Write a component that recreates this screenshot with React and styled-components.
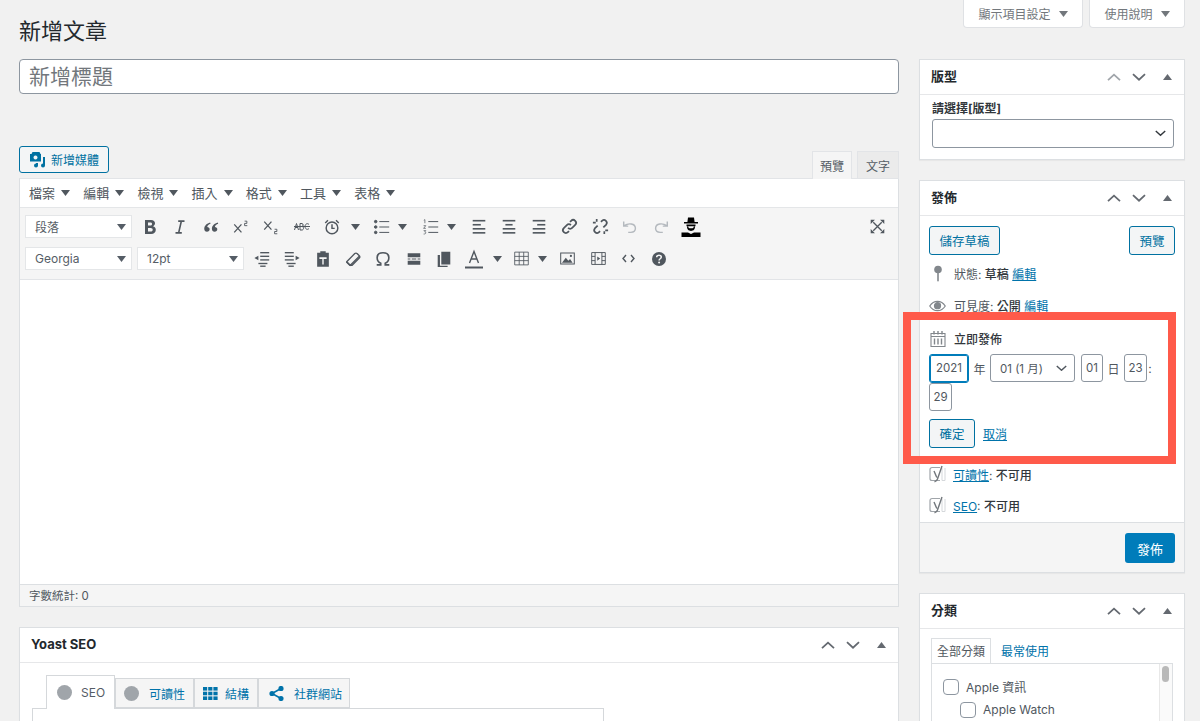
import React from 'react';
import styled, { createGlobalStyle } from 'styled-components';

const GlobalStyle = createGlobalStyle`
  html, body {
    margin: 0;
    background: #f1f1f1;
    color: #32373c;
    font-family: Inter, "Noto Sans CJK TC", sans-serif;
    font-size: 13px;
  }
  * { box-sizing: border-box; }
`

const Wrap = styled.div`
  width: 1200px;
  height: 721px;
  overflow: hidden;
  padding: 0 15px 0 19px;
`
const TopRow = styled.div`
  display: flex;
  justify-content: space-between;
  align-items: flex-start;
  height: 59px;
`
const Heading = styled.h1`
  margin: 0;
  padding-top: 16px;
  font-size: 22px;
  line-height: 30px;
  font-weight: 400;
  color: #23282d;
`
const ScreenMeta = styled.div`
  display: flex;
  gap: 6px;
`
const MetaButton = styled.div`
  display: flex;
  align-items: center;
  justify-content: center;
  gap: 8px;
  width: ${p => p.$w}px;
  height: 28px;
  background: #fff;
  border: 1px solid #dfe1e4;
  border-top: 0;
  border-radius: 0 0 4px 4px;
  font-size: 12px;
  color: #72777c;
`
const Columns = styled.div`
  display: flex;
  gap: 20px;
  align-items: flex-start;
`
const Main = styled.div`
  width: 880px;
`
const Side = styled.div`
  width: 266px;
  display: flex;
  flex-direction: column;
  gap: 20px;
`
const TitleInput = styled.div`
  height: 35px;
  background: #fff;
  border: 1px solid #8d96a0;
  border-radius: 4px;
  padding-left: 9px;
  font-size: 21px;
  line-height: 33px;
  color: #72777c;
`
const EditorTop = styled.div`
  display: flex;
  justify-content: space-between;
  align-items: flex-end;
  margin-top: 52px;
  height: 32px;
`
const MediaButton = styled.div`
  display: flex;
  align-items: center;
  gap: 5px;
  width: 90px;
  height: 27px;
  margin-bottom: 5px;
  padding-left: 9px;
  background: #f3f5f6;
  border: 1px solid #0071a1;
  border-radius: 3px;
  color: #0071a1;
  font-size: 12px;
`
const EditorTabs = styled.div`
  display: flex;
  gap: 5px;
`
const EditorTab = styled.div`
  display: flex;
  align-items: center;
  justify-content: center;
  width: ${p => p.$w}px;
  height: 28px;
  margin-bottom: -1px;
  position: relative;
  font-size: 12px;
  color: #555d66;
  background: ${p => (p.$active ? '#f5f5f5' : '#ebebeb')};
  border: 1px solid #e2e4e7;
  border-bottom: ${p => (p.$active ? '0' : '1px solid #e2e4e7')};
`
const Editor = styled.div`
  border: 1px solid #dcdfe2;
  border-top: 1px solid #e2e4e7;
  height: 429px;
  display: flex;
  flex-direction: column;
`
const MenuBar = styled.div`
  display: flex;
  align-items: center;
  height: 29px;
  flex-shrink: 0;
  padding: 0 0 1px 9px;
  background: #fff;
  border-bottom: 1px solid #e4e6e8;
`
const MenuItem = styled.div`
  display: flex;
  align-items: center;
  gap: 6px;
  width: 54.2px;
  font-size: 13px;
  color: #50575e;
`
const Toolbars = styled.div`
  height: 72px;
  flex-shrink: 0;
  padding: 7px 5px 0;
  background: #f5f5f5;
  border-bottom: 1px solid #e2e4e7;
  display: flex;
  flex-direction: column;
  gap: 9px;
`
const ToolRow = styled.div`
  display: flex;
  align-items: center;
  height: 23px;
  position: relative;
`
const ToolSelect = styled.div`
  display: flex;
  align-items: center;
  justify-content: space-between;
  width: 107px;
  height: 23px;
  margin-right: ${p => p.$mr}px;
  padding: 0 5px 0 9px;
  background: #fff;
  border: 1px solid #e4e6e8;
  font-size: 12px;
  color: #555d66;
`
const ToolButton = styled.div`
  display: flex;
  align-items: center;
  justify-content: ${p => (p.$pad === undefined ? 'center' : 'flex-start')};
  width: ${p => p.$w || 30.3}px;
  height: 23px;
  padding-left: ${p => p.$pad || 0}px;
  flex-shrink: 0;
  color: ${p => (p.$off ? '#b4b9be' : '#50575e')};
`
const ToolSpacer = styled.div`
  flex: 1;
`
const Content = styled.div`
  flex: 1;
  background: #fff;
`
const StatusBar = styled.div`
  height: 22px;
  flex-shrink: 0;
  padding: 0 0 2px 9px;
  display: flex;
  align-items: center;
  background: #f5f5f5;
  border-top: 1px solid #dcdfe2;
  font-size: 11.5px;
  color: #50575e;
`
const Box = styled.section`
  position: relative;
  background: #fff;
  border: 1px solid #dcdfe2;
  box-shadow: 0 1px 1px rgba(0, 0, 0, 0.04);
`
const BoxHead = styled.div`
  display: flex;
  align-items: center;
  justify-content: space-between;
  height: 35px;
  padding: 0 0 3px 11px;
  border-bottom: 1px solid #e6e7e9;
  font-size: 13px;
  font-weight: 700;
  color: #23282d;
`
const HeadControls = styled.div`
  display: flex;
  align-items: center;
  margin-top: 3px;
  color: #646970;
`
const HeadControl = styled.div`
  display: flex;
  justify-content: center;
  width: ${p => p.$w || 25}px;
  color: ${p => (p.$dim ? '#a0a5aa' : '#646970')};
`
const TemplateBody = styled.div`
  height: 64px;
  padding: 5px 12px 0;
`
const FieldLabel = styled.div`
  font-size: 12px;
  line-height: 18px;
  font-weight: 700;
  color: #32373c;
  margin-bottom: 1px;
`
const NativeSelect = styled.div`
  display: flex;
  align-items: center;
  justify-content: flex-end;
  gap: 8px;
  width: ${p => p.$w || 242}px;
  height: 29px;
  padding-right: 7px;
  background: #fff;
  border: 1px solid #8d96a0;
  border-radius: 3px;
  font-size: 12px;
  color: #32373c;
`
const PublishBody = styled.div`
  padding: 10px 9px 0;
  height: 306px;
`
const ButtonRow = styled.div`
  display: flex;
  justify-content: space-between;
  margin-bottom: 4px;
`
const Button = styled.div`
  display: inline-flex;
  align-items: center;
  justify-content: center;
  width: ${p => p.$w}px;
  height: 28.5px;
  background: #f3f5f6;
  border: 1px solid #0071a1;
  border-radius: 3px;
  color: #0071a1;
  font-size: 12.5px;
`
const InfoRow = styled.div`
  display: flex;
  align-items: center;
  gap: ${p => p.$gap || 8}px;
  height: ${p => p.$h || 32}px;
  margin-top: ${p => p.$mt || 0}px;
  padding-bottom: 2px;
  font-size: 12px;
  color: #50575e;
`
const IconSlot = styled.div`
  display: flex;
  justify-content: center;
  width: 17px;
  color: #82878c;
`
const Strong = styled.b`
  font-weight: 500;
  color: #32373c;
`
const TextLink = styled.a`
  color: #0073aa;
  text-decoration: underline;
  margin-left: ${p => p.$ml || 0}px;
  font-size: ${p => p.$size || 12}px;
`
const DateFields = styled.div`
  display: flex;
  flex-wrap: wrap;
  align-items: center;
  width: 240px;
  font-size: 12px;
  color: #50575e;
`
const DateInput = styled.div`
  display: flex;
  align-items: center;
  justify-content: center;
  width: ${p => p.$w}px;
  height: ${p => (p.$focus ? 29 : 28.5)}px;
  background: #fff;
  border: 1px solid ${p => (p.$focus ? '#007cba' : '#8d96a0')};
  box-shadow: ${p => (p.$focus ? 'inset 0 0 0 1px #007cba' : 'none')};
  border-radius: 3px;
  font-size: 11.5px;
  color: #50575e;
`
const DateSep = styled.span`
  width: ${p => p.$w}px;
  text-align: center;
`
const MonthSelect = styled.div`
  display: flex;
  align-items: center;
  justify-content: space-between;
  width: 85px;
  height: 28.5px;
  padding: 0 7px 0 9px;
  background: #fff;
  border: 1px solid #8d96a0;
  border-radius: 3px;
  font-size: 11.5px;
  color: #50575e;
`
const DateActions = styled.div`
  display: flex;
  align-items: center;
  gap: 8px;
  margin-top: 8px;
  margin-bottom: 12px;
`
const PublishFooter = styled.div`
  display: flex;
  justify-content: flex-end;
  height: 50px;
  padding: 10px 9px 0;
  background: #f5f5f5;
  border-top: 1px solid #dcdfe2;
`
const PrimaryButton = styled.div`
  display: flex;
  align-items: center;
  justify-content: center;
  width: 50px;
  height: 30px;
  background: #007cba;
  border-radius: 3px;
  color: #fff;
  font-size: 13px;
`
const Highlight = styled.div`
  position: absolute;
  left: -17px;
  top: 131px;
  width: 273px;
  height: 152px;
  border: 8.5px solid #ff5a4a;
  pointer-events: none;
`
const CategoryBody = styled.div`
  padding: 8px 11px 0;
`
const CatTabs = styled.div`
  display: flex;
  align-items: flex-end;
  height: 26px;
`
const CatTab = styled.div`
  display: flex;
  align-items: center;
  justify-content: center;
  height: 26px;
  padding: 0 5px 3px;
  margin-right: 4px;
  font-size: 12px;
  color: ${p => (p.$active ? '#50575e' : '#0073aa')};
  background: #fff;
  border: ${p => (p.$active ? '1px solid #dcdfe2' : '1px solid transparent')};
  border-bottom: 0;
  margin-bottom: -1px;
  position: relative;
`
const CatList = styled.div`
  position: relative;
  height: 80px;
  width: 242px;
  padding: 11px 0 0 11px;
  border: 1px solid #dcdfe2;
`
const CatRow = styled.div`
  display: flex;
  align-items: center;
  gap: 7px;
  height: 23px;
  margin-left: ${p => (p.$depth ? 17 : 0)}px;
  font-size: 12px;
  color: #50575e;
`
const Check = styled.div`
  width: 16px;
  height: 16px;
  border: 1px solid #8d96a0;
  border-radius: 4px;
  background: #fff;
`
const ScrollTrack = styled.div`
  position: absolute;
  top: 0;
  right: 0;
  bottom: 0;
  width: 13px;
  background: #fafafa;
  border-left: 1px solid #e8e8e8;
`
const ScrollThumb = styled.div`
  margin: 2px 0 0 2px;
  width: 7px;
  height: 16px;
  border-radius: 4px;
  background: #b9b9b9;
`
const YoastBox = styled(Box)`
  margin-top: 20px;
`
const YoastBody = styled.div`
  height: 60px;
  padding: 11px 12px 0;
`
const YoastTabs = styled.div`
  display: flex;
  align-items: flex-end;
  height: 34px;
  padding-left: 14px;
`
const YoastTab = styled.div`
  display: flex;
  align-items: center;
  gap: ${p => p.$gap || 8}px;
  width: ${p => p.$w}px;
  height: ${p => (p.$active ? 34 : 30)}px;
  padding-left: ${p => p.$pad || 8}px;
  margin-bottom: ${p => (p.$active ? -1 : 0)}px;
  position: relative;
  background: ${p => (p.$active ? '#fff' : '#f5f5f5')};
  border: 1px solid #d5d8db;
  border-bottom: ${p => (p.$active ? '0' : '1px solid #d5d8db')};
  font-size: 12px;
  color: ${p => (p.$active ? '#555d66' : '#0073aa')};
`
const Dot = styled.span`
  width: 15px;
  height: 15px;
  border-radius: 50%;
  background: #a0a5aa;
`
const YoastContent = styled.div`
  width: 572px;
  height: 20px;
  border: 1px solid #d5d8db;
`

const Svg = ({ size = 18, children, fill = 'none', stroke = 'currentColor', sw = 1.5 }) => (
  <svg width={size} height={size} viewBox="0 0 20 20" fill={fill} stroke={stroke} strokeWidth={sw}>
    {children}
  </svg>
)

const Caret = ({ up, color = 'currentColor' }) => (
  <svg width="9" height="6" viewBox="0 0 9 6" fill={color}>
    <path d={up ? 'M0 6 L4.5 0 L9 6Z' : 'M0 0 L9 0 L4.5 6Z'} />
  </svg>
)
const Chevron = ({ up, size = 14 }) => (
  <svg width={size} height={size * 0.6} viewBox="0 0 14 8" fill="none" stroke="currentColor" strokeWidth="1.8">
    <path d={up ? 'M1 7 L7 1.5 L13 7' : 'M1 1 L7 6.5 L13 1'} />
  </svg>
)

const lines = (rows) => rows.map(([a, b, y], i) => <path key={i} d={`M${a} ${y}H${b}`} />)

const icons = {
  bold: <Svg size={20} fill="currentColor" stroke="none"><path d="M5 3h6c2.600 0 4 1.300 4 3.300 0 1.400-.8 2.500-2 3 1.700.4 2.800 1.600 2.800 3.400 0 2.500-1.800 4.300-4.700 4.300H5zm3 2.500v3h2.400c1.100 0 1.700-.6 1.700-1.500s-.6-1.500-1.700-1.500zm0 5.400v3.600h2.700c1.300 0 2-.7 2-1.800s-.7-1.800-2-1.800z" fillRule="evenodd" /></Svg>,
  italic: <Svg sw={1.8}><path d="M8 3.500h7M5 16.500h7M11.500 3.500l-3 13" /></Svg>,
  quote: <Svg fill="currentColor" stroke="none"><path d="M9 5C5.500 6 2.500 8.500 2.500 12c0 2 1.200 3.300 3 3.300s3-1.200 3-2.800-1.200-2.600-2.700-2.600c.4-1.500 1.700-2.700 3.700-3.400zM17.500 5c-3.500 1-6.500 3.500-6.500 7 0 2 1.200 3.300 3 3.300s3-1.200 3-2.800-1.200-2.600-2.700-2.600c.4-1.500 1.700-2.700 3.700-3.400z" /></Svg>,
  sup: <Svg sw={1.4}><path d="M2.500 7l8 9M10.500 7l-8 9" /><path d="M14 3.500h2.500V6H14v2.500h3" strokeWidth="1" /></Svg>,
  sub: <Svg sw={1.4}><path d="M2.500 4l8 9M10.500 4l-8 9" /><path d="M14 12.500h2.500V15H14v2.500h3" strokeWidth="1" /></Svg>,
  abc: <svg width="16" height="9" viewBox="0 0 32 18" fill="none" stroke="currentColor" strokeWidth="2"><path d="M1 16 L5 3 L9 16M2 11H8M12 3V16M12 3h4c3 0 3 6 0 6h-4M16 9c4 0 4 7 0 7h-4M30 5c-4-4-8 0-8 4s4 8 8 4M0 9H32" /></svg>,
  clock: <Svg sw={1.6}><circle cx="10" cy="11" r="6.500" /><path d="M10 7v4.500h3M2.500 5.500l3-3M17.500 5.500l-3-3" /></Svg>,
  bullist: <Svg sw={1.1}>{lines([[7, 18, 4], [7, 18, 10], [7, 18, 16]])}<circle cx="3" cy="4" r="1.400" fill="currentColor" /><circle cx="3" cy="10" r="1.400" fill="currentColor" /><circle cx="3" cy="16" r="1.400" fill="currentColor" /></Svg>,
  numlist: <Svg sw={1.1}>{lines([[7, 18, 4], [7, 18, 10], [7, 18, 16]])}<path d="M2 2.500l1.200-.7v4M1.800 8.500h2.400l-2.400 3h2.500M1.800 14h2.400l-1.200 1.500c1.800 0 1.800 2.500-1.200 2.300" strokeWidth=".8" /></Svg>,
  alignLeft: <Svg sw={1.8}>{lines([[3, 17, 3], [3, 12, 7.500], [3, 17, 12], [3, 17, 16.500]])}</Svg>,
  alignCenter: <Svg sw={1.8}>{lines([[3, 17, 3], [6, 14, 7.500], [3, 17, 12], [3, 17, 16.500]])}</Svg>,
  alignRight: <Svg sw={1.8}>{lines([[3, 17, 3], [8, 17, 7.500], [3, 17, 12], [3, 17, 16.500]])}</Svg>,
  link: <Svg size={19} sw={1.8}><path d="M8.500 11.500a3 3 0 0 0 4.300 0l3.200-3.200a3 3 0 0 0-4.300-4.300L10.500 5.200M11.500 8.500a3 3 0 0 0-4.300 0L4 11.700A3 3 0 0 0 8.300 16l1.200-1.200" /></Svg>,
  unlink: <Svg size={19} sw={1.8}><path d="M13 11l3-3a3 3 0 0 0-4.200-4.200l-1.300 1.400M7 9l-3 3a3 3 0 0 0 4.200 4.200l1.300-1.400M2 6h3M6 2v3M18 14h-3M14 18v-3" /></Svg>,
  undo: <Svg sw={1.6}><path d="M3 4v5h5M3.500 8.500C8 5.500 16 5.500 16 11.500c0 3-2.500 4.500-5 4.500H8" /></Svg>,
  redo: <Svg sw={1.6}><path d="M17 4v5h-5M16.500 8.500C12 5.500 4 5.500 4 11.500c0 3 2.500 4.500 5 4.500h3" /></Svg>,
  hat: (
    <svg width="20" height="20" viewBox="0 0 20 20" fill="#000" stroke="none">
      <path d="M7 0.500h6l.6 4.500H17v1.500H3V5h3.400zM5.500 7.500h9v1.700h-9zM6 9.500h1.200c.2 1 .6 1.700 1.300 1.700h3c.7 0 1.100-.7 1.300-1.700H14c0 1.800-.5 3-1.500 3.700l-2.500.8-2.500-.8C6.500 12.500 6 11.300 6 9.500zM0.500 15.500H7l3 1.500 3-1.500h6.500V20H.5z" />
    </svg>
  ),
  fullscreen: <Svg size={17} sw={1.6}><path d="M5 5l10 10M15 5L5 15" /><path d="M2 2h5L2 7zM18 2h-5l5 5zM2 18h5l-5-5zM18 18h-5l5-5z" fill="currentColor" stroke="none" /></Svg>,
  outdent: <Svg sw={1.5}>{lines([[8, 18, 3], [8, 18, 7], [8, 18, 11], [6, 16, 15], [8, 14, 18]])}<path d="M6 6.500L1.500 9 6 11.500z" fill="currentColor" stroke="none" /></Svg>,
  indent: <Svg sw={1.5}>{lines([[2, 12, 3], [2, 12, 7], [2, 12, 11], [4, 14, 15], [6, 12, 18]])}<path d="M14 6.500L18.500 9 14 11.500z" fill="currentColor" stroke="none" /></Svg>,
  paste: <Svg fill="currentColor" stroke="none"><path d="M7 1.500h6V3h3.500v15.500h-13V3H7zM6 8v2h3.200v6h1.600v-6H14V8z" fillRule="evenodd" /></Svg>,
  eraser: <Svg sw={1.5}><path d="M3 13l9-9c.8-.8 1.800-.8 2.500 0l2.500 2.500c.7.7.7 1.700 0 2.500l-8 8H6.500L3 13.500z" /><path d="M3 13l4 4 10-10" fill="none" /></Svg>,
  omega: <Svg sw={1.8}><path d="M3 16.500h4.500v-1.800C5 13.500 3.500 11 3.500 8.500 3.500 5 6.300 3 10 3s6.500 2 6.500 5.500c0 2.500-1.500 5-4 6.200v1.800H17" /></Svg>,
  hr: <Svg fill="currentColor" stroke="none"><path d="M3 3.500h14V8H3zM3 12h14v4.500H3zM3 9.500h3v1H3zM7.500 9.500h5v1h-5zM14 9.500h3v1h-3z" /></Svg>,
  copy: <Svg fill="currentColor" stroke="none"><path d="M7 2h10v14H7zM3 5.500h2.500v12H14V19H3z" /></Svg>,
  textColor: (
    <svg width="18" height="20" viewBox="0 0 18 20" fill="none" stroke="currentColor" strokeWidth="1.4">
      <path d="M4.500 14L9 2.500 13.500 14M6 10h6" /><path d="M0 18.500h18" strokeWidth="2" />
    </svg>
  ),
  table: <Svg size={17} sw={1}><path d="M2 2.500h16v15H2zM2 7.500h16M2 12.500h16M7.300 2.500v15M12.600 2.500v15" /></Svg>,
  image: <Svg size={17} sw={1.2}><path d="M2 3.500h16v13H2z" /><path d="M3.500 15l4.500-6 3 3.500 2-2 3 4.500z" fill="currentColor" stroke="none" /><circle cx="14" cy="7" r="1.300" fill="currentColor" stroke="none" /></Svg>,
  media: <Svg size={17} sw={1.1}><path d="M2 3h16v14H2zM6 3v14M14 3v14M2 7.500h4M2 12.500h4M14 7.500h4M14 12.500h4" /><path d="M8.500 7.500l3.500 2.500-3.500 2.500z" fill="currentColor" stroke="none" /></Svg>,
  code: <svg width="13" height="9" viewBox="0 0 13 9" fill="none" stroke="currentColor" strokeWidth="1.400"><path d="M4 1L1 4.500 4 8M9 1l3 3.500L9 8" /></svg>,
  help: (
    <svg width="16" height="16" viewBox="0 0 16 16">
      <circle cx="8" cy="8" r="7" fill="currentColor" />
      <path d="M5.700 6.300C5.700 4.900 6.700 4.200 8 4.200s2.300.8 2.300 1.900c0 1.700-2.200 1.600-2.200 3.300" fill="none" stroke="#f5f5f5" strokeWidth="1.500" />
      <circle cx="8.100" cy="11.500" r="1" fill="#f5f5f5" />
    </svg>
  ),
}

const MediaIcon = () => (
  <svg width="17" height="17" viewBox="0 0 17 17" fill="#0071a1">
    <path fillRule="evenodd" d="M3.500 1h7l1 2H12v7.500H1V3h1.500zM6.500 4.500a2 2 0 1 0 .01 0z" />
    <path d="M14 6h2v8.500a2 2 0 1 1-2-2zM7 12h2v2.500a2 2 0 1 1-2-2z" />
  </svg>
)
const PinIcon = () => (
  <svg width="10" height="17" viewBox="0 0 10 17" fill="currentColor">
    <circle cx="5" cy="4.500" r="3.800" /><rect x="4.200" y="7" width="1.600" height="9.500" rx=".8" />
  </svg>
)
const EyeIcon = () => (
  <svg width="18" height="12" viewBox="0 0 18 12" fill="none" stroke="currentColor" strokeWidth="1.300">
    <path d="M.8 6C3 2.500 6 1 9 1s6 1.500 8.200 5C15 9.500 12 11 9 11S3 9.500.8 6z" />
    <circle cx="9" cy="5.700" r="3.200" fill="currentColor" />
  </svg>
)
const CalendarIcon = () => (
  <svg width="16" height="17" viewBox="0 0 16 17" fill="none" stroke="currentColor" strokeWidth="1.100">
    <path d="M1 3.500h14v13H1zM1 6.500h14" />
    <path d="M4 1v3.500M8 1v3.500M12 1v3.500M4.500 8.500v6M8 8.500v6M11.500 8.500v6" strokeWidth="1.400" />
  </svg>
)
const YoastIcon = () => (
  <svg width="17" height="18" viewBox="0 0 17 18" fill="none">
    <path d="M11 2.500H3a2 2 0 0 0-2 2v9a2 2 0 0 0 2 2h8" stroke="#a0a5aa" strokeWidth="1.200" />
    <path d="M13 3v12.500h3V3" stroke="#d5d8db" strokeWidth="1" />
    <path d="M5 6l2.800 6.500M13 1L8.500 14c-.5 1.500-1.500 2.500-3 2.800" stroke="#72777c" strokeWidth="1.400" />
  </svg>
)
const GridIcon = () => (
  <svg width="15" height="13" viewBox="0 0 15 13" fill="#0073aa">
    {[0, 5.200, 10.400].flatMap(x => [0, 4.700, 9.400].map(y => <rect key={`${x}-${y}`} x={x} y={y} width="4.200" height="3.600" />))}
  </svg>
)
const ShareIcon = () => (
  <svg width="15" height="15" viewBox="0 0 15 15" fill="#0073aa" stroke="#0073aa" strokeWidth="1.600">
    <path d="M12 2.500L3 7.500l9 5" fill="none" />
    <circle cx="12" cy="2.500" r="1.800" /><circle cx="3" cy="7.500" r="1.800" /><circle cx="12" cy="12.500" r="1.800" />
  </svg>
)

const menus = ['檔案', '編輯', '檢視', '插入', '格式', '工具', '表格']

// name, then width and left padding of the caret button if the tool has one
const rowOne = [['bold'], ['italic'], ['quote'], ['sup'], ['sub'], ['abc'], ['clock', 20, 3.5], ['bullist', 18, 1], ['numlist', 18, 1.6], ['alignLeft'], ['alignCenter'], ['alignRight'], ['link'], ['unlink'], ['undo'], ['redo'], ['hat']]
const rowTwo = [['outdent'], ['indent'], ['paste'], ['eraser'], ['omega'], ['hr'], ['copy'], ['textColor', 17, 3.5], ['table', 16, 1], ['image'], ['media'], ['code'], ['help']]

const Tools = ({ items }) => items.flatMap(([name, caret, pad]) => {
  const out = [<ToolButton key={name} $off={name === 'undo' || name === 'redo'}>{icons[name]}</ToolButton>]
  if (caret) out.push(<ToolButton key={`${name}-caret`} $w={caret} $pad={pad}><Caret /></ToolButton>)
  return out
})

const Controls = ({ dimUp }) => (
  <HeadControls>
    <HeadControl $dim={dimUp}><Chevron up /></HeadControl>
    <HeadControl><Chevron /></HeadControl>
    <HeadControl $w={33}><Caret up /></HeadControl>
  </HeadControls>
)

export default function App() {
  return (
    <Wrap>
      <GlobalStyle />
      <TopRow>
        <Heading>新增文章</Heading>
        <ScreenMeta>
          <MetaButton $w={120}>顯示項目設定 <Caret /></MetaButton>
          <MetaButton $w={96}>使用說明 <Caret /></MetaButton>
        </ScreenMeta>
      </TopRow>
      <Columns>
        <Main>
          <TitleInput>新增標題</TitleInput>
          <EditorTop>
            <MediaButton><MediaIcon />新增媒體</MediaButton>
            <EditorTabs>
              <EditorTab $active $w={40}>預覽</EditorTab>
              <EditorTab $w={42}>文字</EditorTab>
            </EditorTabs>
          </EditorTop>
          <Editor>
            <MenuBar>
              {menus.map(m => <MenuItem key={m}>{m} <Caret /></MenuItem>)}
            </MenuBar>
            <Toolbars>
              <ToolRow>
                <ToolSelect $mr={3}>段落 <Caret /></ToolSelect>
                <Tools items={rowOne} />
                <ToolSpacer />
                <ToolButton>{icons.fullscreen}</ToolButton>
              </ToolRow>
              <ToolRow>
                <ToolSelect $mr={5}>Georgia <Caret /></ToolSelect>
                <ToolSelect $mr={3}>12pt <Caret /></ToolSelect>
                <Tools items={rowTwo} />
              </ToolRow>
            </Toolbars>
            <Content />
            <StatusBar>字數統計: 0</StatusBar>
          </Editor>
          <YoastBox>
            <BoxHead>
              Yoast SEO
              <Controls />
            </BoxHead>
            <YoastBody>
              <YoastTabs>
                <YoastTab $active $w={69} $pad={10} $gap={9}><Dot />SEO</YoastTab>
                <YoastTab $w={79} $gap={10}><Dot />可讀性</YoastTab>
                <YoastTab $w={64} $gap={7}><GridIcon />結構</YoastTab>
                <YoastTab $w={92} $pad={10} $gap={10}><ShareIcon />社群網站</YoastTab>
              </YoastTabs>
              <YoastContent />
            </YoastBody>
          </YoastBox>
        </Main>
        <Side>
          <Box>
            <BoxHead>版型<Controls dimUp /></BoxHead>
            <TemplateBody>
              <FieldLabel>請選擇[版型]</FieldLabel>
              <NativeSelect><Chevron size={11} /></NativeSelect>
            </TemplateBody>
          </Box>
          <Box>
            <BoxHead>發佈<Controls /></BoxHead>
            <PublishBody>
              <ButtonRow>
                <Button $w={71}>儲存草稿</Button>
                <Button $w={46}>預覽</Button>
              </ButtonRow>
              <InfoRow>
                <IconSlot><PinIcon /></IconSlot>
                <span>狀態: <Strong>草稿</Strong> <TextLink>編輯</TextLink></span>
              </InfoRow>
              <InfoRow>
                <IconSlot><EyeIcon /></IconSlot>
                <span>可見度: <Strong>公開</Strong> <TextLink>編輯</TextLink></span>
              </InfoRow>
              <InfoRow $h={29} $mt={2}>
                <IconSlot><CalendarIcon /></IconSlot>
                <Strong>立即發佈</Strong>
              </InfoRow>
              <DateFields>
                <DateInput $w={40} $focus>2021</DateInput>
                <DateSep $w={21}>年</DateSep>
                <MonthSelect>01 (1 月)<Chevron size={11} /></MonthSelect>
                <DateSep $w={6} />
                <DateInput $w={22}>01</DateInput>
                <DateSep $w={21}>日</DateSep>
                <DateInput $w={23}>23</DateInput>
                <DateSep $w={6}>:</DateSep>
                <DateInput $w={23}>29</DateInput>
              </DateFields>
              <DateActions>
                <Button $w={46}>確定</Button>
                <TextLink>取消</TextLink>
              </DateActions>
              <InfoRow $h={31} $gap={7}>
                <IconSlot><YoastIcon /></IconSlot>
                <span><TextLink>可讀性</TextLink>: <Strong>不可用</Strong></span>
              </InfoRow>
              <InfoRow $h={31} $gap={7}>
                <IconSlot><YoastIcon /></IconSlot>
                <span><TextLink>SEO</TextLink>: <Strong>不可用</Strong></span>
              </InfoRow>
            </PublishBody>
            <PublishFooter><PrimaryButton>發佈</PrimaryButton></PublishFooter>
            <Highlight />
          </Box>
          <Box>
            <BoxHead>分類<Controls /></BoxHead>
            <CategoryBody>
              <CatTabs>
                <CatTab $active>全部分類</CatTab>
                <CatTab>最常使用</CatTab>
              </CatTabs>
              <CatList>
                <CatRow><Check />Apple 資訊</CatRow>
                <CatRow $depth><Check />Apple Watch</CatRow>
                <ScrollTrack><ScrollThumb /></ScrollTrack>
              </CatList>
            </CategoryBody>
          </Box>
        </Side>
      </Columns>
    </Wrap>
  )
}
